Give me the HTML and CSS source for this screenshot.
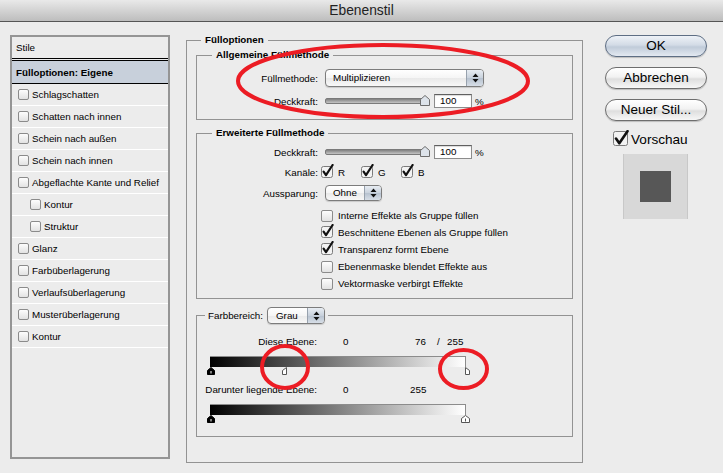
FILE: index.html
```html
<!DOCTYPE html>
<html lang="de">
<head>
    <meta charset="UTF-8">
    <meta name="viewport" content="width=device-width, initial-scale=1.0">
    <title>Ebenenstil</title>
    <link rel="stylesheet" href="styles.css">
</head>
<body>
<div class="window">
    <div class="titlebar">Ebenenstil</div>

    <div class="content">
        <ul class="style-list">
            <li class="list-head">Stile</li>
            <li class="list-item active">Fülloptionen: Eigene</li>
            <li class="list-item"><span class="box"></span>Schlagschatten</li>
            <li class="list-item"><span class="box"></span>Schatten nach innen</li>
            <li class="list-item"><span class="box"></span>Schein nach außen</li>
            <li class="list-item"><span class="box"></span>Schein nach innen</li>
            <li class="list-item"><span class="box"></span>Abgeflachte Kante und Relief</li>
            <li class="list-item sub"><span class="box"></span>Kontur</li>
            <li class="list-item sub"><span class="box"></span>Struktur</li>
            <li class="list-item"><span class="box"></span>Glanz</li>
            <li class="list-item"><span class="box"></span>Farbüberlagerung</li>
            <li class="list-item"><span class="box"></span>Verlaufsüberlagerung</li>
            <li class="list-item"><span class="box"></span>Musterüberlagerung</li>
            <li class="list-item"><span class="box"></span>Kontur</li>
        </ul>

        <fieldset class="group outer">
            <legend>Fülloptionen</legend>

            <fieldset class="group general">
                <legend>Allgemeine Füllmethode</legend>
                <div class="frow">
                    <span class="lbl">Füllmethode:</span>
                    <div class="select blend">
                        <span class="val">Multiplizieren</span>
                        <span class="arr"><svg width="7" height="10" viewBox="0 0 7 10"><path d="M3.5 0.5 L6.5 4 H0.5Z M3.5 9.5 L6.5 6 H0.5Z" fill="#111"/></svg></span>
                    </div>
                </div>
                <div class="frow gap7">
                    <span class="lbl">Deckkraft:</span>
                    <div class="slider">
                        <span class="track"></span>
                        <svg class="thumb" width="10" height="11" viewBox="0 0 10 11"><path d="M0.5 10.5 V4.5 L5 0.5 L9.5 4.5 V10.5Z" fill="#dde3ea" stroke="#6d6d6d"/></svg>
                    </div>
                    <span class="num">100</span><span class="pct">%</span>
                </div>
            </fieldset>

            <fieldset class="group advanced">
                <legend>Erweiterte Füllmethode</legend>
                <div class="frow">
                    <span class="lbl">Deckkraft:</span>
                    <div class="slider">
                        <span class="track"></span>
                        <svg class="thumb" width="10" height="11" viewBox="0 0 10 11"><path d="M0.5 10.5 V4.5 L5 0.5 L9.5 4.5 V10.5Z" fill="#dde3ea" stroke="#6d6d6d"/></svg>
                    </div>
                    <span class="num">100</span><span class="pct">%</span>
                </div>
                <div class="frow gap6">
                    <span class="lbl">Kanäle:</span>
                    <div class="channels">
                        <span class="chan"><svg class="chk" width="13" height="14" viewBox="0 0 13 14"><rect x="0.5" y="2.5" width="11" height="11" rx="2" fill="#f3f3f3" stroke="#7b7b7b"/><path d="M2.6 7.6 L5 11.2 L11.6 1" stroke="#111" stroke-width="2.2" fill="none" stroke-linecap="round" stroke-linejoin="round"/></svg>R</span>
                        <span class="chan"><svg class="chk" width="13" height="14" viewBox="0 0 13 14"><rect x="0.5" y="2.5" width="11" height="11" rx="2" fill="#f3f3f3" stroke="#7b7b7b"/><path d="M2.6 7.6 L5 11.2 L11.6 1" stroke="#111" stroke-width="2.2" fill="none" stroke-linecap="round" stroke-linejoin="round"/></svg>G</span>
                        <span class="chan"><svg class="chk" width="13" height="14" viewBox="0 0 13 14"><rect x="0.5" y="2.5" width="11" height="11" rx="2" fill="#f3f3f3" stroke="#7b7b7b"/><path d="M2.6 7.6 L5 11.2 L11.6 1" stroke="#111" stroke-width="2.2" fill="none" stroke-linecap="round" stroke-linejoin="round"/></svg>B</span>
                    </div>
                </div>
                <div class="frow gap6">
                    <span class="lbl">Aussparung:</span>
                    <div class="select knockout">
                        <span class="val">Ohne</span>
                        <span class="arr"><svg width="7" height="10" viewBox="0 0 7 10"><path d="M3.5 0.5 L6.5 4 H0.5Z M3.5 9.5 L6.5 6 H0.5Z" fill="#111"/></svg></span>
                    </div>
                </div>
                <ul class="checklist">
                    <li><span class="box big"></span>Interne Effekte als Gruppe füllen</li>
                    <li><svg class="chk" width="13" height="14" viewBox="0 0 13 14"><rect x="0.5" y="2.5" width="11" height="11" rx="2" fill="#f3f3f3" stroke="#7b7b7b"/><path d="M2.6 7.6 L5 11.2 L11.6 1" stroke="#111" stroke-width="2.2" fill="none" stroke-linecap="round" stroke-linejoin="round"/></svg>Beschnittene Ebenen als Gruppe füllen</li>
                    <li><svg class="chk" width="13" height="14" viewBox="0 0 13 14"><rect x="0.5" y="2.5" width="11" height="11" rx="2" fill="#f3f3f3" stroke="#7b7b7b"/><path d="M2.6 7.6 L5 11.2 L11.6 1" stroke="#111" stroke-width="2.2" fill="none" stroke-linecap="round" stroke-linejoin="round"/></svg>Transparenz formt Ebene</li>
                    <li><span class="box big"></span>Ebenenmaske blendet Effekte aus</li>
                    <li><span class="box big"></span>Vektormaske verbirgt Effekte</li>
                </ul>
            </fieldset>

            <fieldset class="group blendif">
                <legend><span class="legend-row">Farbbereich:
                    <span class="select gray">
                        <span class="val">Grau</span>
                        <span class="arr"><svg width="7" height="10" viewBox="0 0 7 10"><path d="M3.5 0.5 L6.5 4 H0.5Z M3.5 9.5 L6.5 6 H0.5Z" fill="#111"/></svg></span>
                    </span></span>
                </legend>
                <div class="vrow">
                    <span class="lbl">Diese Ebene:</span>
                    <span class="v-zero">0</span>
                    <span class="v-split">76</span>
                    <span class="v-slash">/</span>
                    <span>255</span>
                </div>
                <div class="ramp"></div>
                <div class="knobs">
                    <svg class="knob" style="left:-3px" width="8" height="8" viewBox="0 0 8 8"><path d="M0.5 7.5 V3.5 L4 0.5 L7.5 3.5 V7.5Z" fill="#000" stroke="#000"/><path d="M4 4 V6.5" stroke="#fff"/></svg>
                    <svg class="knob" style="left:72px" width="5" height="8" viewBox="0 0 5 8"><path d="M0.5 7.5 V3.5 L4.5 0.5 V7.5Z" fill="#fff" stroke="#555"/></svg>
                    <svg class="knob" style="left:255px" width="5" height="8" viewBox="0 0 5 8"><path d="M0.5 0.5 L4.5 3.5 V7.5 H0.5Z" fill="#fff" stroke="#555"/></svg>
                </div>
                <div class="vrow second">
                    <span class="lbl">Darunter liegende Ebene:</span>
                    <span class="v-zero short">0</span>
                    <span>255</span>
                </div>
                <div class="ramp"></div>
                <div class="knobs">
                    <svg class="knob" style="left:-3px" width="8" height="8" viewBox="0 0 8 8"><path d="M0.5 7.5 V3.5 L4 0.5 L7.5 3.5 V7.5Z" fill="#000" stroke="#000"/><path d="M4 4 V6.5" stroke="#fff"/></svg>
                    <svg class="knob" style="left:251px" width="9" height="8" viewBox="0 0 9 8"><path d="M0.5 7.5 V3.5 L4.5 0.5 L8.5 3.5 V7.5Z" fill="#fff" stroke="#555"/><path d="M4.5 3.5 V6.5" stroke="#555"/></svg>
                </div>
            </fieldset>
        </fieldset>

        <div class="actions">
            <div class="btn default">OK</div>
            <div class="btn">Abbrechen</div>
            <div class="btn">Neuer Stil...</div>
            <div class="preview-toggle">
                <svg class="chk big" width="16" height="16" viewBox="0 0 16 16"><rect x="0.5" y="1.5" width="14" height="14" rx="2" fill="#f3f3f3" stroke="#7b7b7b"/><path d="M3 8.5 L6.3 13.3 L14.5 1.2" stroke="#111" stroke-width="2.6" fill="none" stroke-linecap="round" stroke-linejoin="round"/></svg>
                <span>Vorschau</span>
            </div>
            <div class="preview"><span class="swatch"></span></div>
        </div>
    </div>

    <!-- rote Markierungen -->
    <svg class="marks" width="723" height="473" viewBox="0 0 723 473">
        <ellipse cx="383" cy="81" rx="145" ry="36" fill="none" stroke="#ec1c24" stroke-width="4"/>
        <ellipse cx="285" cy="367" rx="23" ry="21" fill="none" stroke="#ec1c24" stroke-width="4"/>
        <ellipse cx="463.5" cy="369" rx="23.5" ry="19" fill="none" stroke="#ec1c24" stroke-width="4"/>
    </svg>
</div>
</body>
</html>
```

FILE: styles.css
```css
body {
    margin: 0;
    background-color: #ececec;
    font-family: 'Liberation Sans', Arial, sans-serif;
    font-size: 9.8px;
    color: #000;
}

.window {
    position: relative;
    width: 723px;
    height: 473px;
    overflow: hidden;
}

.titlebar {
    height: 21px;
    line-height: 21px;
    text-align: center;
    font-size: 13.8px;
    color: #222;
    background: linear-gradient(to bottom, #e9e9e9, #bdbdbd);
    border-bottom: 1px solid #555;
}

.content {
    display: flex;
    align-items: flex-start;
    padding-left: 10px;
}

/* Stile-Liste links */
.style-list {
    list-style: none;
    margin: 13px 0 0 0;
    padding: 0;
    width: 160px;
    height: 424px;
    box-sizing: border-box;
    border: 2px solid #959595;
    flex: none;
}

.list-head {
    height: 21px;
    line-height: 21px;
    padding-left: 4px;
    border-bottom: 3px double #000;
}

.list-item {
    display: flex;
    align-items: center;
    height: 21px;
    border-bottom: 1px solid #fff;
}

.list-item.active {
    height: 22px;
    padding-left: 4px;
    font-weight: bold;
    background-color: #c8d0db;
    border-bottom-color: #000;
}

.box {
    width: 11px;
    height: 11px;
    box-sizing: border-box;
    border: 1px solid #8b8b8b;
    border-radius: 2px;
    background: linear-gradient(to bottom, #fdfdfd, #e2e2e2);
    margin: 0 3px 0 6px;
    flex: none;
}

.list-item.sub .box {
    margin-left: 18px;
}

/* Gruppen */
.group {
    margin: 0;
    padding: 0;
    border: 1px solid #939393;
    min-width: 0;
}

.group > legend {
    font-weight: bold;
    line-height: 12px;
    padding: 0 4px;
    margin-left: 15px;
}

.outer {
    width: 397px;
    box-sizing: border-box;
    margin: 12px 0 0 16px;
    padding: 3px 9px 25px 9px;
    flex: none;
}

.outer > legend {
    margin-left: 5px;
}

.general {
    padding: 8px 0 11px 0;
}

.advanced {
    margin-top: 7px;
    padding: 6px 0 6px 0;
}

.blendif {
    margin-top: 7px;
    padding: 11px 0 13px 0;
}

.blendif > legend {
    font-weight: normal;
    padding: 0 3px;
    margin-left: 8px;
}

.legend-row {
    display: inline-flex;
    align-items: center;
    height: 19px;
    gap: 4px;
}

.frow {
    display: flex;
    align-items: center;
}

.gap7 { margin-top: 7px; }
.gap6 { margin-top: 6px; }

.frow > .lbl {
    width: 121px;
    margin-right: 7px;
    text-align: right;
    flex: none;
}

/* Popup-Menüs */
.select {
    display: flex;
    height: 18px;
    box-sizing: border-box;
    border: 1px solid #7c7c7c;
    border-radius: 4px;
    overflow: hidden;
    background: linear-gradient(to bottom, #fff 0%, #f5f5f5 50%, #e9e9e9 52%, #f8f8f8 100%);
    box-shadow: 0 1px 1px rgba(0, 0, 0, 0.15);
}

.select .val {
    flex: 1;
    padding-left: 7px;
    line-height: 16px;
}

.select .arr {
    width: 16px;
    display: flex;
    align-items: center;
    justify-content: center;
    border-left: 1px solid #97a1ad;
    background: linear-gradient(to bottom, #e8edf3, #c8d1dc 50%, #b7c2cf 52%, #d7dee7);
}

.blend { width: 159px; }
.knockout { width: 57px; height: 16px; }
.knockout .val { line-height: 14px; }
.gray { width: 58px; height: 17px; }
.gray .val { line-height: 15px; padding-left: 8px; }

/* Regler */
.slider {
    position: relative;
    display: flex;
    align-items: center;
    width: 105px;
    height: 14px;
}

.slider .track {
    flex: 1;
    height: 4px;
    margin-right: 5px;
    border-radius: 2px;
    border: 1px solid #7a7a7a;
    background: linear-gradient(to bottom, #808080, #c4c4c4);
}

.slider .thumb {
    position: absolute;
    right: 0;
    top: 1px;
}

.num {
    width: 38px;
    height: 14px;
    box-sizing: border-box;
    margin-left: 4px;
    padding-left: 5px;
    line-height: 12px;
    background-color: #fff;
    border: 1px solid #8c8c8c;
    border-top-color: #606060;
    box-shadow: inset 0 1px 1px rgba(0, 0, 0, 0.15);
}

.pct {
    margin-left: 3px;
}

/* Kontrollkästchen */
.chk {
    flex: none;
    margin-top: -3px;
}

.channels {
    display: flex;
    margin-left: -4px;
}

.chan {
    display: flex;
    align-items: center;
    width: 40px;
    height: 14px;
}

.chan .chk {
    margin-right: 4px;
}

.checklist {
    list-style: none;
    margin: 6px 0 0 0;
    padding: 0 0 0 124px;
}

.checklist li {
    display: flex;
    align-items: center;
    height: 17px;
}

.checklist .box.big {
    width: 12px;
    height: 12px;
    margin: 0 5px 0 0;
}

.checklist .chk {
    margin-right: 4px;
}

/* Farbbereich */
.vrow {
    display: flex;
    line-height: 12px;
}

.vrow.second {
    margin-top: 9px;
}

.vrow .lbl {
    width: 120px;
    text-align: right;
}

.v-zero {
    margin-left: 26px;
    width: 72px;
}

.v-zero.short {
    width: 67px;
}

.v-split {
    width: 22px;
}

.v-slash {
    width: 10px;
}

.ramp {
    width: 256px;
    height: 11px;
    box-sizing: border-box;
    margin: 8px 0 0 13px;
    border-top: 1px solid #8c8c8c;
    border-right: 1px solid #8c8c8c;
    background: linear-gradient(to right, #000, #fff);
}

.knobs {
    position: relative;
    height: 8px;
    margin-left: 13px;
}

.knob {
    position: absolute;
    top: 0;
}

/* Schaltflächen rechts */
.actions {
    width: 102px;
    margin: 13px 0 0 22px;
    flex: none;
}

.btn {
    height: 22px;
    box-sizing: border-box;
    margin-bottom: 10px;
    border: 1px solid #6e6e6e;
    border-radius: 11px;
    text-align: center;
    line-height: 20px;
    font-size: 13.5px;
    color: #000;
    background: linear-gradient(to bottom, #fff, #f2f2f2 45%, #dedede 55%, #f7f7f7);
    box-shadow: 0 1px 1px rgba(0, 0, 0, 0.2);
}

.btn.default {
    border-color: #5e6e84;
    background: linear-gradient(to bottom, #eef2f7, #d3dbe6 45%, #c0cbd9 55%, #e3e9f1);
}

.preview-toggle {
    display: flex;
    align-items: center;
    margin: 0 0 0 8px;
    font-size: 13.6px;
    height: 16px;
}

.preview-toggle .chk {
    margin: -2px 2px 0 0;
}

.preview {
    width: 65px;
    height: 65px;
    margin: 7px 0 0 18px;
    display: flex;
    align-items: center;
    justify-content: center;
    background-color: #d8d8d8;
    box-sizing: border-box;
    border-left: 1px solid #c8c8c8;
    border-right: 1px solid #c8c8c8;
}

.swatch {
    width: 31px;
    height: 31px;
    background-color: #575757;
}

.marks {
    position: absolute;
    left: 0;
    top: 0;
    pointer-events: none;
}
```
